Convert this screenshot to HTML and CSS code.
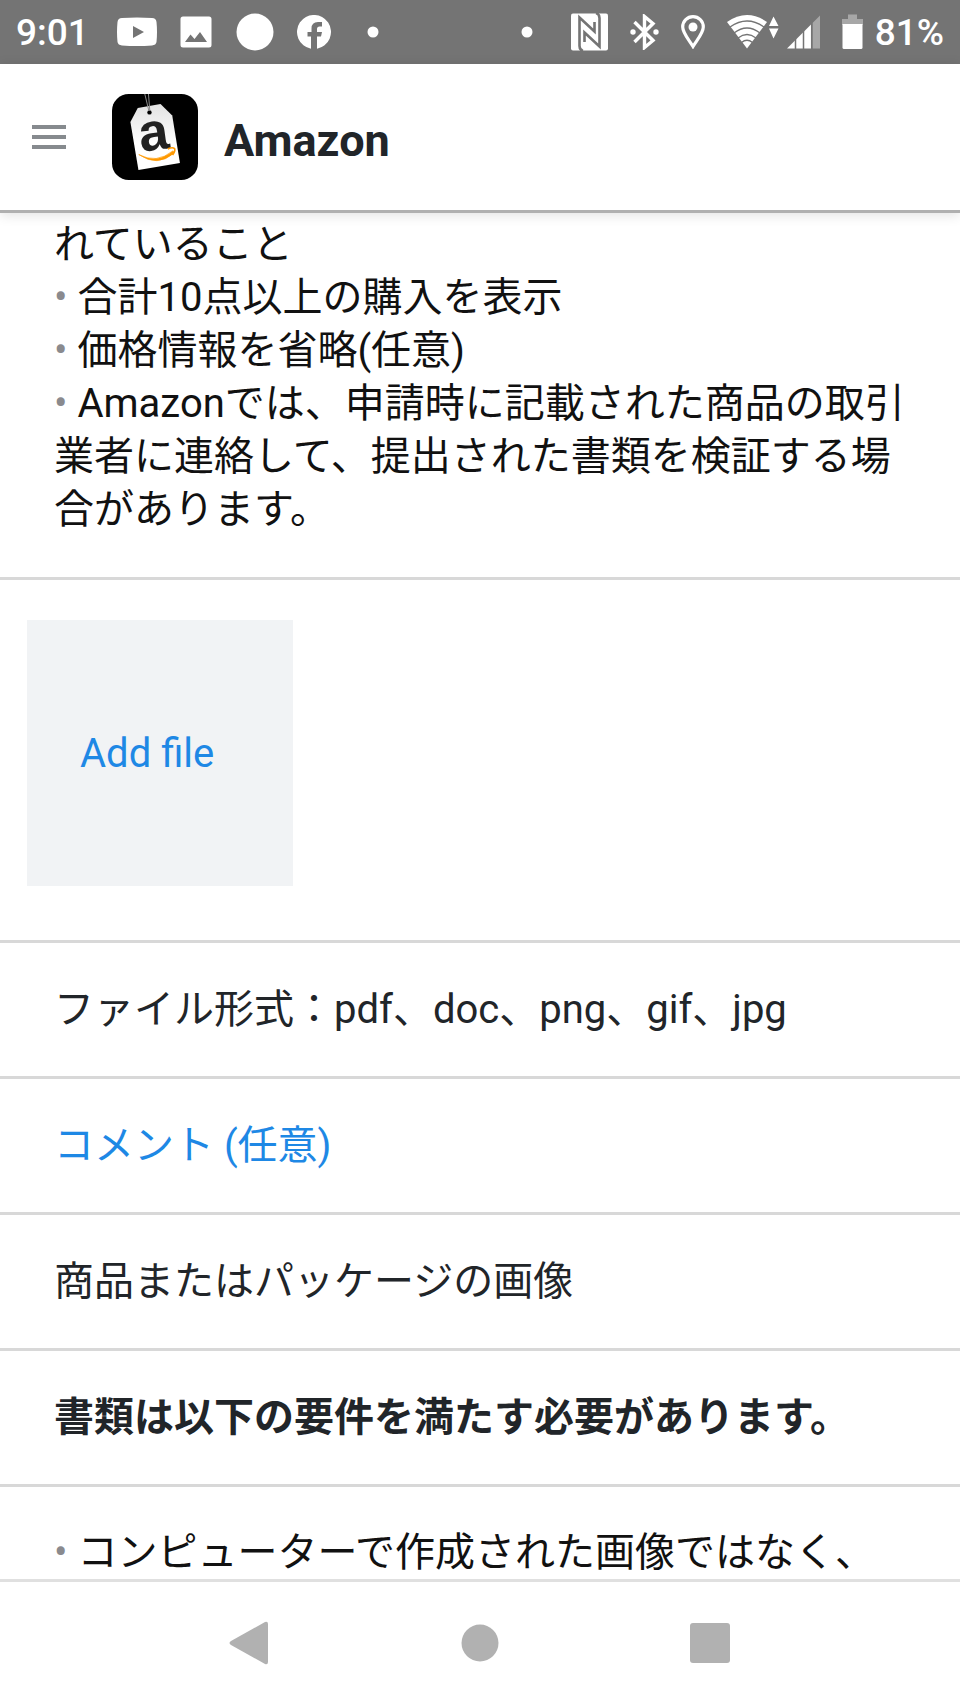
FILE: index.html
```html
<!DOCTYPE html>
<html lang="ja">
<head>
<meta charset="utf-8">
<meta name="viewport" content="width=device-width, initial-scale=1">
<title>Amazon</title>
<link rel="stylesheet" href="styles.css">
</head>
<body>
<div class="status">
  <span class="status-text">9:01</span>
  <div class="notifications">
    <svg width="40" height="30" viewBox="0 0 40 30"><path fill="#fff" fill-rule="evenodd" d="M5 1Q20 0 35 1Q39 1 39.500 5Q40.500 15 39.500 25Q39 28 35 28.500Q20 29.500 5 28.500Q1 28 .5 25Q-.5 15 .5 5Q1 1 5 1ZM16 9V21L27 15Z"/></svg>
    <svg width="32" height="32" viewBox="0 0 32 32"><path fill="#fff" fill-rule="evenodd" d="M3 .5H29Q31.500 .5 31.500 3V29Q31.500 31.500 29 31.500H3Q.5 31.500 .5 29V3Q.5 .5 3 .5ZM5 26H27L20 16L14.500 23L10.500 18.500Z"/></svg>
    <svg width="38" height="38" viewBox="0 0 38 38"><circle cx="19" cy="19" r="18.500" fill="#fff"/></svg>
    <svg width="34" height="34" viewBox="0 0 34 34"><path fill="#fff" d="M14 33.700A17 17 0 1 1 20 33.700V21.500H24L25 17H20V14Q20 11.500 22.500 11.500H25V7H21Q14.500 7 14.500 13.500V17H10.500V21.500H14Z"/></svg>
    <svg width="12" height="12" viewBox="0 0 12 12"><circle cx="6" cy="6" r="5.500" fill="#fff"/></svg>
  </div>
  <div class="system">
    <svg class="more" width="12" height="12" viewBox="0 0 12 12"><circle cx="6" cy="6" r="5.500" fill="#fff"/></svg>
    <svg width="37" height="38" viewBox="0 0 37 38"><rect y=".5" width="37" height="37" rx="2" fill="#fff"/><g fill="none" stroke="#747474" stroke-width="2.600"><path d="M12 38Q8.500 37 8.500 33V4.500L23.500 18.500V9"/><path d="M25 0Q28.500 1 28.500 5V33.500L13.500 19.500V29"/></g></svg>
    <svg width="29" height="36" viewBox="0 0 29 36"><path d="M4.500 8L23 26.500L14.500 33.500V2.500L23 9.500L4.500 28" fill="none" stroke="#fff" stroke-width="3.400"/><circle cx="3" cy="18" r="2.700" fill="#fff"/><circle cx="26" cy="18" r="2.700" fill="#fff"/></svg>
    <svg width="24" height="34" viewBox="0 0 24 34"><path d="M12 31.500C8 25 1.700 18 1.700 12A10.300 10.300 0 0 1 22.300 12C22.300 18 16 25 12 31.500Z" fill="none" stroke="#fff" stroke-width="3.200"/><circle cx="12" cy="12" r="4.500" fill="#fff"/></svg>
    <svg width="93" height="34" viewBox="0 0 93 34"><path fill="#fff" d="M0 7Q20 -7 40 7L20 33.500Z"/><g fill="none" stroke="#747474" stroke-width="1.300"><path d="M3 12Q20 0 37 12M7 18Q20 8 33 18M11 23Q20 16 29 23M14.500 27.500Q20 23 25.500 27.500"/></g><path fill="#fff" d="M42 11L46.500 1.500L51.500 11ZM42 13.500H51.500L46.500 23.500Z"/><path fill="#fff" d="M60 33.500L84 9.500V33.500Z"/><path fill="#a7a7a7" d="M85.500 8L93 .5V33.500H85.500Z"/><path stroke="#747474" stroke-width="1.500" d="M68.500 20V34M76.500 12V34M84.700 6V34"/></svg>
    <div class="power">
      <svg width="21" height="36" viewBox="0 0 21 36"><path fill="#a7a7a7" d="M6 .5H15V5H21V11H0V5H6Z"/><path fill="#fff" d="M.5 10H20.500V33.500Q20.500 35 19 35H2Q.5 35 .5 33.500Z"/></svg>
      <span class="status-text">81%</span>
    </div>
  </div>
</div>
<header class="header">
  <button class="menu" type="button" aria-label="メニュー"><span></span><span></span><span></span></button>
  <svg class="logo" viewBox="0 0 257 257" role="img" aria-label="Amazon">
    <defs><linearGradient id="tag" x2="0" y2="1"><stop stop-color="#e2e2e2"/><stop offset=".6" stop-color="#fff"/></linearGradient></defs>
    <rect width="257" height="257" rx="50"/>
    <path d="M55 84L77 42L145 30L180 64L203 206L79 227Z" fill="url(#tag)"/>
    <circle cx="112" cy="55" r="6.500"/>
    <path d="M98 0L110 50M109 0L113 50" stroke="#8b8b8b" stroke-width="3"/>
    <text class="logo-letter" x="131" y="167" text-anchor="middle" transform="rotate(-8 131 167)">a</text>
    <path d="M80 181Q133 210 182 170L186 176Q136 220 80 181Z" fill="#f90" stroke="#f90" stroke-width="2"/>
    <path d="M167 164Q181 158 187 163Q190 170 181 182" fill="none" stroke="#f90" stroke-width="5"/>
  </svg>
  <h1 class="title">Amazon</h1>
</header>
<main class="content">
  <section class="copy copy-first">
    <p>れていること</p>
    <p><span class="bullet">•</span> 合計10点以上の購入を表示</p>
    <p><span class="bullet">•</span> 価格情報を省略(任意)</p>
    <p><span class="bullet">•</span> Amazonでは、申請時に記載された商品の取引業者に連絡して、提出された書類を検証する場合があります。</p>
  </section>
  <section class="upload"><button class="add-file" type="button">Add file</button></section>
  <p class="row">ファイル形式：pdf、doc、png、gif、jpg</p>
  <a class="row comment" href="#comment">コメント (任意)</a>
  <p class="row">商品またはパッケージの画像</p>
  <h2 class="row">書類は以下の要件を満たす必要があります。</h2>
  <section class="copy copy-last">
    <p><span class="bullet">•</span> コンピューターで作成された画像ではなく、</p>
  </section>
</main>
<nav class="nav">
  <button type="button" aria-label="戻る"><svg width="42" height="44" viewBox="0 0 42 44"><path d="M2 20L36 1Q39 0 39 3V41Q39 44 36 43L2 24Q-1 22 2 20Z"/></svg></button>
  <button type="button" aria-label="ホーム"><svg width="38" height="38" viewBox="0 0 38 38"><circle cx="19" cy="19" r="18.500"/></svg></button>
  <button type="button" aria-label="最近使用したアプリ"><svg width="40" height="40" viewBox="0 0 40 40"><rect width="40" height="40" rx="3"/></svg></button>
</nav>
</body>
</html>
```
FILE: styles.css
```css
* {
  box-sizing: border-box;
}

body {
  display: flex;
  flex-direction: column;
  min-height: 100vh;
  margin: 0;
  background: #fff;
  color: #212529;
  font: 40px/53px Roboto, "Noto Sans CJK JP", sans-serif;
}

p,
h1,
h2 {
  margin: 0;
}

svg {
  display: block;
  flex: none;
}

button {
  padding: 0;
  border: 0;
  background: none;
  font: inherit;
}

.status {
  display: flex;
  align-items: center;
  height: 64px;
  padding: 0 16px;
  background: #747474;
  color: #fff;
}

.status-text {
  padding-top: 2px;
  font-size: 37px;
  font-weight: 500;
  line-height: 62px;
}

.notifications {
  display: grid;
  grid-template-columns: repeat(5, 59px);
  align-items: center;
  justify-items: center;
  margin-left: 19px;
}

.system {
  display: flex;
  align-items: center;
  gap: 22px;
  margin-left: auto;
}

.more {
  margin-right: 16px;
}

.power {
  display: flex;
  align-items: center;
  gap: 12px;
}

.header {
  display: flex;
  align-items: center;
  height: 149px;
  padding: 0 32px;
  border-bottom: 3px solid #b0b0b0;
  box-shadow: 0 2px 12px rgba(0, 0, 0, .12);
}

.menu {
  display: grid;
  gap: 6px;
  width: 34px;
}

.menu span {
  height: 4px;
  background: #868a8e;
}

.logo {
  width: 86px;
  height: 86px;
  margin: 0 26px 0 46px;
  overflow: visible;
}

.logo-letter {
  fill: #222;
  font: 700 160px "Liberation Sans", sans-serif;
}

.title {
  padding-top: 6px;
  font-size: 45px;
  font-weight: 700;
}

.content {
  flex: 1;
}

.copy {
  padding: 39px 54px;
  color: #111;
}

.copy-first {
  padding-top: 5px;
  padding-bottom: 41px;
  border-bottom: 3px solid #d8d8d8;
}

.copy-last {
  padding-bottom: 0;
}

.bullet {
  color: #8a8a8e;
}

.upload {
  padding: 40px 27px 54px;
  border-bottom: 3px solid #d8d8d8;
}

.add-file {
  display: block;
  width: 266px;
  height: 266px;
  padding: 0 53px;
  background: #f1f3f5;
  color: #1e88e5;
  text-align: left;
}

.row {
  display: block;
  padding: 40px 54px;
  border-bottom: 3px solid #d8d8d8;
  font-size: 40px;
}

h2.row {
  font-weight: 700;
}

.comment {
  color: #1e88e5;
  text-decoration: none;
}

.nav {
  display: flex;
  justify-content: center;
  height: 128px;
  padding-bottom: 4px;
  border-top: 3px solid #e0e0e0;
}

.nav button {
  display: flex;
  align-items: center;
  justify-content: center;
  width: 24%;
  fill: #b1b1b1;
}
```
